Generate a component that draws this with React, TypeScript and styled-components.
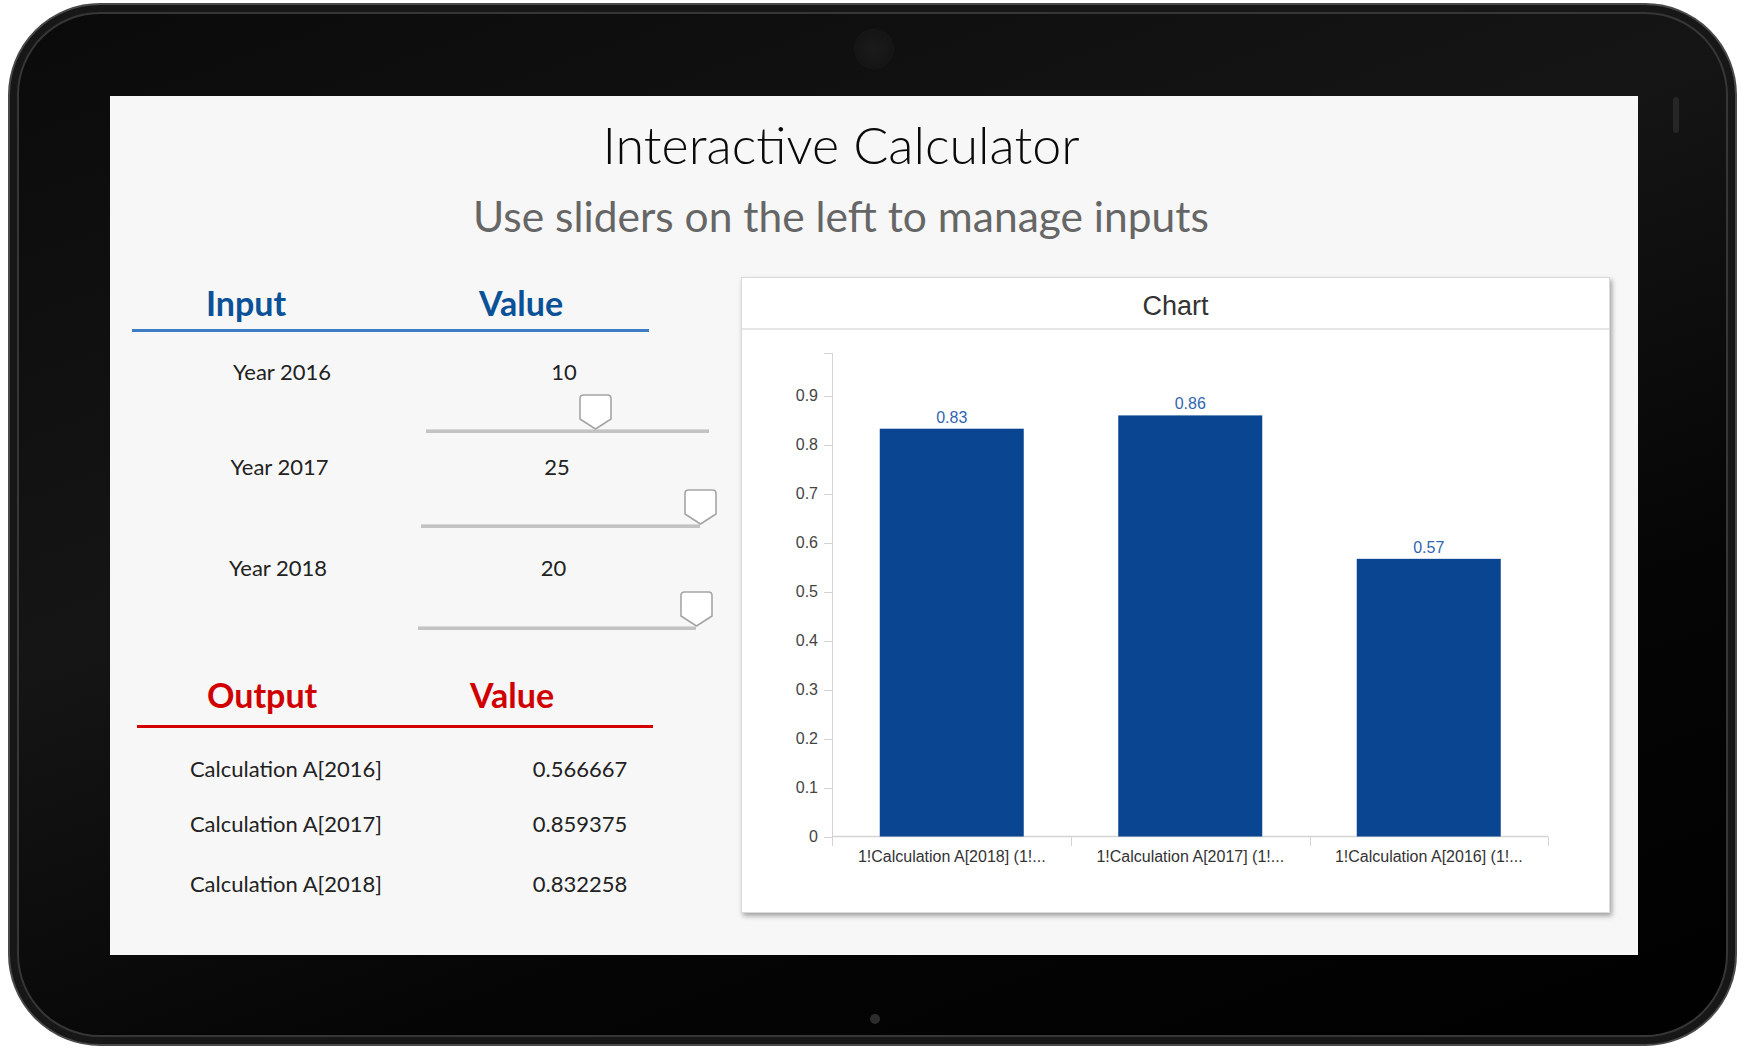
import React from 'react';
import styled, { createGlobalStyle } from 'styled-components';

const GlobalStyle = createGlobalStyle`
  html, body { margin: 0; padding: 0; background: #ffffff; }
  body { font-family: Lato, "Open Sans", sans-serif; }
`;

const Device = styled.div`
  position: relative;
  box-sizing: border-box;
  width: 1729px;
  height: 1043px;
  margin: 3px 0 0 8px;
  padding: 91px 0 0 100px;
  border-radius: 92px;
  border: 2px solid #4a4a4a;
  background: linear-gradient(160deg, #0a0a0a 0%, #151515 40%, #050505 70%, #000 100%);
  box-shadow: inset 0 0 0 7px #171717, inset 0 0 0 9px #363636;
`;

const Camera = styled.div`
  position: absolute;
  left: 845px;
  top: 25px;
  width: 38px;
  height: 38px;
  border-radius: 50%;
  background: radial-gradient(circle, #1b1b1b 0%, #151515 70%, #121212 100%);
  box-shadow: 0 0 0 1px #191919;
`;

const HomeDot = styled.div`
  position: absolute;
  left: 860px;
  top: 1009px;
  width: 10px;
  height: 10px;
  border-radius: 50%;
  background: #2c2c2c;
`;

const SideSlot = styled.div`
  position: absolute;
  left: 1663px;
  top: 92px;
  width: 6px;
  height: 36px;
  border-radius: 3px;
  background: #262626;
`;

const Screen = styled.div`
  box-sizing: border-box;
  width: 1528px;
  height: 859px;
  background: #f7f7f7;
  display: flex;
  flex-direction: column;
`;

const Heading = styled.header`
  padding-right: 66px;
  text-align: center;
`;

const Title = styled.h1`
  margin: 17px 0 0;
  font: 300 52px/1.2 Lato, sans-serif;
  color: #0a0a0a;
`;

const Subtitle = styled.h2`
  margin: 14.5px 0 0;
  font: 400 42.5px/1.2 Lato, sans-serif;
  color: #666666;
`;

const Main = styled.main`
  display: flex;
  align-items: flex-start;
  margin-top: 36px;
  padding-left: 22px;
`;

const LeftPanel = styled.section`
  width: 609px;
  padding-top: 6px;
  display: flex;
  flex-direction: column;
`;

const SectionHeader = styled.div<{ $color: string; $line: string; $split: number; $indent: number; $lead: number; $pad: number; $width: number; $top: number }>`
  display: grid;
  grid-template-columns: ${(p) => p.$split}px 1fr;
  width: ${(p) => p.$width}px;
  margin: ${(p) => p.$top}px 0 0 ${(p) => p.$indent}px;
  padding-bottom: ${(p) => p.$pad}px;
  border-bottom: 3px solid ${(p) => p.$line};
  font: 700 34px/1.2 Lato, sans-serif;
  color: ${(p) => p.$color};
  & > span:first-child { padding-left: ${(p) => p.$lead}px; }
`;

const InputRow = styled.div<{ $labelW: number; $trackW: number; $top: number }>`
  display: grid;
  grid-template-columns: ${(p) => p.$labelW}px ${(p) => p.$trackW}px;
  margin-top: ${(p) => p.$top}px;
  font: 400 22px/1.2 Lato, sans-serif;
  color: #222222;
`;

const RowLabel = styled.div`
  padding-left: 6px;
  text-align: center;
`;

const ValueCell = styled.div`
  display: flex;
  flex-direction: column;
`;

const ValueText = styled.div`
  padding-right: 7px;
  text-align: center;
`;

const Slider = styled.div`
  position: relative;
  margin-top: 9px;
  height: 39px;
`;

const Track = styled.div`
  margin-top: 35px;
  height: 3px;
  background: #c3c3c3;
  border-top: 1px solid #d8d8d8;
`;

const Thumb = styled.svg`
  position: absolute;
  top: 0;
  width: 33px;
  height: 36px;
`;

const OutputRow = styled.div<{ $top: number }>`
  display: grid;
  grid-template-columns: 308px 280px;
  margin-top: ${(p) => p.$top}px;
  font: 400 22px/1.2 Lato, sans-serif;
  color: #222222;
  & > div { text-align: center; }
`;

const ChartCard = styled.section`
  box-sizing: border-box;
  width: 869px;
  height: 636px;
  background: #ffffff;
  border: 1px solid #dadada;
  box-shadow: 2px 3px 5px rgba(0, 0, 0, 0.35);
  display: flex;
  flex-direction: column;
`;

const ChartHeader = styled.div`
  box-sizing: border-box;
  height: 52px;
  padding-top: 7px;
  border-bottom: 2px solid #e6e6e6;
  display: flex;
  align-items: center;
  justify-content: center;
  font: 400 27px "Liberation Sans", Arial, sans-serif;
  color: #333333;
`;

const ChartBody = styled.div`
  flex: 1;
  display: flex;
`;

const inputs = [
  { label: 'Year 2016', value: '10', frac: 0.6, labelW: 294, trackW: 283, top: 27 },
  { label: 'Year 2017', value: '25', frac: 1, labelW: 289, trackW: 279, top: 21 },
  { label: 'Year 2018', value: '20', frac: 1, labelW: 286, trackW: 278, top: 27 },
];

const outputs = [
  { label: 'Calculation A[2016]', value: '0.566667', top: 28 },
  { label: 'Calculation A[2017]', value: '0.859375', top: 29 },
  { label: 'Calculation A[2018]', value: '0.832258', top: 34 },
];

const bars = [
  { label: '1!Calculation A[2018] (1!...', value: 0.832258, text: '0.83' },
  { label: '1!Calculation A[2017] (1!...', value: 0.859375, text: '0.86' },
  { label: '1!Calculation A[2016] (1!...', value: 0.566667, text: '0.57' },
];

const SliderThumb: React.FC<{ left: number }> = ({ left }) => (
  <Thumb viewBox="0 0 33 36" style={{ left }}>
    <path
      d="M4.5 1 H28.5 Q32 1 32 4.5 V25 L16.5 35 L1 25 V4.5 Q1 1 4.5 1 Z"
      fill="#ffffff"
      stroke="#a5a5a5"
      strokeWidth="1.6"
      strokeLinejoin="round"
    />
  </Thumb>
);

const BarChart: React.FC = () => {
  const ax = 90.5;
  const zero = 506.5;
  const unit = 490;
  const end = 806;
  const cat = (end - ax) / 3;
  const barW = 144;
  const ticks = [0, 0.1, 0.2, 0.3, 0.4, 0.5, 0.6, 0.7, 0.8, 0.9];
  const font = '"Liberation Sans", Arial, sans-serif';
  return (
    <svg width="867" height="582" viewBox="0 0 867 582">
      <line x1={ax} y1={23} x2={ax} y2={516} stroke="#d4d4d4" strokeWidth="1" />
      <line x1={82} y1={23.5} x2={ax} y2={23.5} stroke="#d4d4d4" strokeWidth="1" />
      {ticks.map((t) => {
        const y = Math.round(zero - t * unit) + 0.5;
        return (
          <g key={t}>
            <line x1={82} y1={y} x2={ax} y2={y} stroke="#d4d4d4" strokeWidth="1" />
            <text x={76} y={y - 1} dy="0.35em" textAnchor="end" fontFamily={font} fontSize="16" fill="#444">
              {t === 0 ? '0' : t.toFixed(1)}
            </text>
          </g>
        );
      })}
      <line x1={ax} y1={zero} x2={end} y2={zero} stroke="#d4d4d4" strokeWidth="1.5" />
      {[1, 2, 3].map((i) => {
        const x = Math.round(ax + i * cat) + 0.5;
        return <line key={i} x1={x} y1={zero} x2={x} y2={516} stroke="#d4d4d4" strokeWidth="1" />;
      })}
      {bars.map((b, i) => {
        const x = ax + i * cat + (cat - barW) / 2;
        const h = b.value * unit;
        const cx = ax + i * cat + cat / 2;
        return (
          <g key={b.label}>
            <rect x={x} y={zero - h} width={barW} height={h} fill="#0a4592" />
            <text x={cx} y={zero - h - 6} textAnchor="middle" fontFamily={font} fontSize="16" fill="#2f66b0">
              {b.text}
            </text>
            <text x={cx} y={532} textAnchor="middle" fontFamily={font} fontSize="16" fill="#333">
              {b.label}
            </text>
          </g>
        );
      })}
    </svg>
  );
};

export default function App() {
  return (
    <>
      <GlobalStyle />
      <Device>
        <Camera />
        <SideSlot />
        <HomeDot />
        <Screen>
          <Heading>
            <Title>Interactive Calculator</Title>
            <Subtitle>Use sliders on the left to manage inputs</Subtitle>
          </Heading>
          <Main>
            <LeftPanel>
              <SectionHeader $color="#0b5197" $line="#3b7cc2" $split={347} $indent={0} $lead={74} $pad={5} $width={517} $top={0}>
                <span>Input</span>
                <span>Value</span>
              </SectionHeader>
              {inputs.map((r) => (
                <InputRow key={r.label} $labelW={r.labelW} $trackW={r.trackW} $top={r.top}>
                  <RowLabel>{r.label}</RowLabel>
                  <ValueCell>
                    <ValueText>{r.value}</ValueText>
                    <Slider>
                      <Track />
                      <SliderThumb left={r.frac * r.trackW - 16.5} />
                    </Slider>
                  </ValueCell>
                </InputRow>
              ))}
              <SectionHeader $color="#d10000" $line="#d40000" $split={333} $indent={5} $lead={70} $pad={9} $width={516} $top={45}>
                <span>Output</span>
                <span>Value</span>
              </SectionHeader>
              {outputs.map((r) => (
                <OutputRow key={r.label} $top={r.top}>
                  <div>{r.label}</div>
                  <div>{r.value}</div>
                </OutputRow>
              ))}
            </LeftPanel>
            <ChartCard>
              <ChartHeader>Chart</ChartHeader>
              <ChartBody>
                <BarChart />
              </ChartBody>
            </ChartCard>
          </Main>
        </Screen>
      </Device>
    </>
  );
}
